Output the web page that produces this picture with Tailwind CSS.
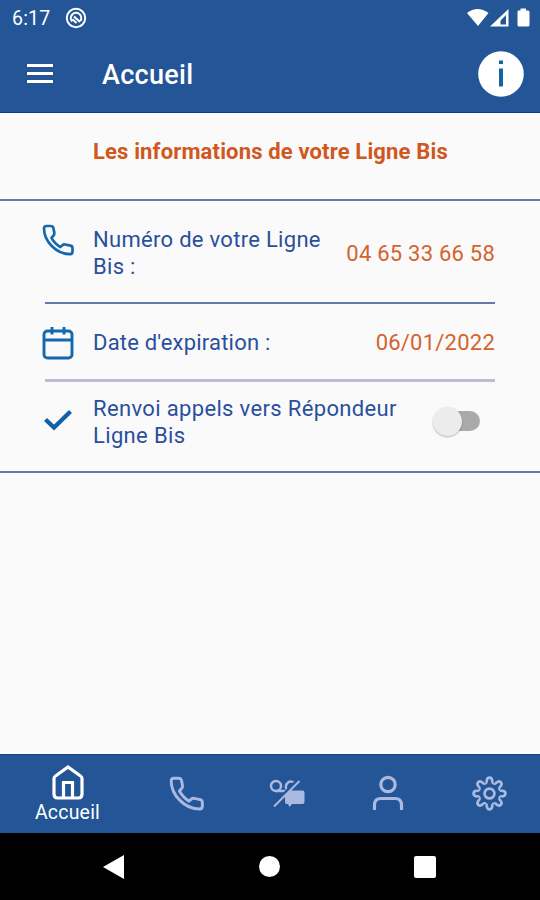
<!DOCTYPE html>
<html lang="fr">
<head>
<meta charset="utf-8">
<title>Accueil</title>
<script src="https://cdn.jsdelivr.net/npm/@tailwindcss/browser@4"></script>
</head>
<body class="bg-[#fafafa]">
<svg class="hidden">
  <symbol id="phone" viewBox="0 0 32 32"><path d="M4.500 2H8.500Q11 2 11.400 4L12.300 8.500Q12.600 10.500 11.500 11.500L9.500 13.800Q13 20 18.300 23L20.400 21.200Q21.500 20.200 23 20.500L28.500 21.600Q30.500 22.200 30.500 24V27.500Q30.500 30.200 28 30.200C14 30.200 2 17 2 4.500Q2 2 4.500 2Z" fill="none" stroke="currentColor" stroke-width="2.700" stroke-linejoin="round"/></symbol>
  <path id="tooth" d="M-4.200-10.200C-3-9.700-2.700-11.500-2.500-13.200Q-2.100-15.500 0-15.500Q2.100-15.500 2.500-13.200C2.700-11.500 3-9.700 4.200-10.200"/>
</svg>
<div class="flex h-[900px] w-[540px] flex-col overflow-hidden font-['Roboto',sans-serif] text-[22px] leading-[27px] text-[#2a4f9c]">
  <header class="flex h-[113px] flex-col border-b border-[#0b3a88] bg-[#235597] text-white">
    <div class="flex h-9 items-center pt-px pl-3">
      <span class="w-[53px] text-[19.500px] leading-none tracking-[.2px] whitespace-nowrap">6:17</span>
      <svg class="mt-[-2px] size-[22px]" viewBox="0 0 22 22" fill="none" stroke="currentColor"><circle cx="11" cy="11" r="9.200" stroke-width="2"/><path d="M7.200 14.500A5.200 5.200 0 1 1 15.300 14M7.500 12.300 11.500 16M9 9.500l6 5.500" stroke-width="2.100"/></svg>
      <svg class="mt-[-2px] ml-auto mr-[10px] h-5 w-[63px]" viewBox="0 0 63 20" fill="currentColor"><path d="M0 5Q10.500-3 21.500 5L11 18Z"/><path fill-rule="evenodd" d="M23 18.500 41.500 1V18.500ZM33.500 16.500H39V7L33.500 12.500Z"/><path d="M50.500 3.500Q50.500 2.500 51.500 2.500H53.500V.5H59V2.500H61Q62.500 2.500 62.500 4V17Q62.500 18.500 61 18.500H52Q50.500 18.500 50.500 17Z"/></svg>
    </div>
    <div class="flex h-[76px] items-center pr-4 pl-[27px]">
      <div class="mt-[-1px] flex w-[26px] flex-col gap-[5px]">
        <div class="h-[3px] bg-white"></div><div class="h-[3px] bg-white"></div><div class="h-[3px] bg-white"></div>
      </div>
      <h1 class="mt-[3px] ml-[49px] text-[27px] font-medium tracking-[.3px] whitespace-nowrap">Accueil</h1>
      <svg class="ml-auto size-[46px]" viewBox="0 0 46 46"><circle cx="23" cy="23" r="22.800" fill="#fff"/><path d="M21 9.500h4v3.500h-4zM21 17.500h4v18h-4z" fill="#1464a0"/></svg>
    </div>
  </header>

  <main class="flex-1">
    <h2 class="h-[88px] border-b-2 border-[#6479ae] pt-[25px] pl-[93px] font-bold tracking-[.15px] whitespace-nowrap text-[#d0571d]">Les informations de votre Ligne Bis</h2>
    <section class="border-b-2 border-[#6479ae] pr-[45px] pl-[42px]">
      <div class="flex h-[101px] items-start pt-[25px]">
        <svg class="mt-[-2px] size-8 shrink-0 text-[#1568ad]"><use href="#phone"/></svg>
        <p class="ml-[19px] w-[245px] tracking-[.3px]">Numéro de votre Ligne<br>Bis :</p>
        <p class="mt-[14px] ml-auto tracking-[.23px] whitespace-nowrap text-[#d4632f]">04 65 33 66 58</p>
      </div>
      <div class="ml-[3px] h-[2px] bg-[#6479ae]"></div>
      <div class="flex h-[75px] items-center pt-[2px]">
        <svg class="h-[34px] w-8 shrink-0" viewBox="0 0 32 34" fill="none" stroke="#1568ad" stroke-width="2.900"><rect x="2" y="5" width="28" height="27" rx="3.500"/><path d="M2 14H30M10 1V8.500M22 1V8.500"/></svg>
        <p class="ml-[19px] tracking-[.2px] whitespace-nowrap">Date d'expiration :</p>
        <p class="ml-auto tracking-[.23px] whitespace-nowrap text-[#d4632f]">06/01/2022</p>
      </div>
      <div class="ml-[3px] h-[3px] bg-[#bbbcd5]"></div>
      <div class="flex h-[89px] items-start pt-[13px]">
        <svg class="mt-[13px] h-6 w-8 shrink-0" viewBox="0 0 32 24" fill="none" stroke="#1261a8" stroke-width="4.300"><path d="M3.500 11.500 12 19.500 28.500 3.500"/></svg>
        <p class="ml-[19px] whitespace-nowrap tracking-[.35px]">Renvoi appels vers Répondeur<br>Ligne Bis</p>
        <div class="mt-[11px] mr-[15px] ml-auto flex h-[30px] w-[47px] items-center">
          <div class="z-10 size-[29px] shrink-0 rounded-full bg-[#ececec] shadow-[0_1px_2px_#0004]"></div>
          <div class="-ml-[18px] h-5 w-9 rounded-full bg-[#aaaaaa]"></div>
        </div>
      </div>
    </section>
  </main>

  <nav class="flex h-[79px] shrink-0 border-t border-[#0f4589] bg-[#235597] px-[17px] text-[#a9b9e0]">
    <div class="flex w-[101px] flex-col items-center pt-[9px] text-white">
      <svg class="h-9 w-8" viewBox="0 0 32 36" fill="none" stroke="currentColor" stroke-width="3.200"><path d="M2 14.500Q2 13 3.500 12L16 3 28.500 12Q30 13 30 14.500V30Q30 34 26.500 34H5.500Q2 34 2 30ZM11.500 34V18.500H20.500V34"/></svg>
      <span class="mt-[2px] text-[19.500px] leading-[22px] tracking-[.2px] whitespace-nowrap">Accueil</span>
    </div>
    <div class="flex w-[101px] items-center justify-center pr-px pb-[2px] pl-[36px]"><svg class="size-[35px]"><use href="#phone"/></svg></div>
    <div class="flex w-[101px] items-center justify-center pr-px pb-[2px] pl-[36px]"><svg class="h-8 w-9" viewBox="0 0 36 32" fill="none" stroke="currentColor" stroke-width="2.500"><circle cx="7" cy="9" r="5"/><path d="M7 14H18M26 6.500A5 5 0 1 0 18 13"/><path d="M18.500 13.500H33.500Q35.500 13.500 35.500 15.500V25Q35.500 27 33.500 27H23L20.500 30 19 27H17.500Q16 27 16 25V16Z" fill="currentColor" stroke="none"/><path d="M5 27.500 28.500 3.500" stroke="#235597" stroke-width="3.500"/><path d="M5 29.500 30.500 4" stroke-width="2"/></svg></div>
    <div class="flex w-[101px] items-center justify-center pr-[2px] pb-[2px] pl-[36px]"><svg class="h-9 w-8" viewBox="0 0 32 36" fill="none" stroke="currentColor" stroke-width="3.200"><circle cx="16" cy="9.500" r="7.200"/><path d="M2.500 35V30Q2.500 23.500 9 23.500H23Q29.500 23.500 29.500 30V35"/></svg></div>
    <div class="flex w-[101px] items-center justify-center pb-[2px] pl-[36px]"><svg class="size-[35px]" viewBox="-17 -17 34 34" fill="none" stroke="currentColor" stroke-width="2.600"><circle r="4.800"/><use href="#tooth"/><use href="#tooth" transform="rotate(45)"/><use href="#tooth" transform="rotate(90)"/><use href="#tooth" transform="rotate(135)"/><use href="#tooth" transform="rotate(180)"/><use href="#tooth" transform="rotate(225)"/><use href="#tooth" transform="rotate(270)"/><use href="#tooth" transform="rotate(315)"/></svg></div>
  </nav>
  <footer class="flex h-[67px] shrink-0 items-center justify-between bg-black pr-[104px] pl-[103px]">
    <svg class="h-6 w-[21px]" viewBox="0 0 21 24"><path d="M0 12 21 0V24Z" fill="#fff"/></svg>
    <div class="size-[21px] rounded-full bg-white"></div>
    <div class="size-[22px] rounded-[2px] bg-white"></div>
  </footer>
</div>
</body>
</html>
